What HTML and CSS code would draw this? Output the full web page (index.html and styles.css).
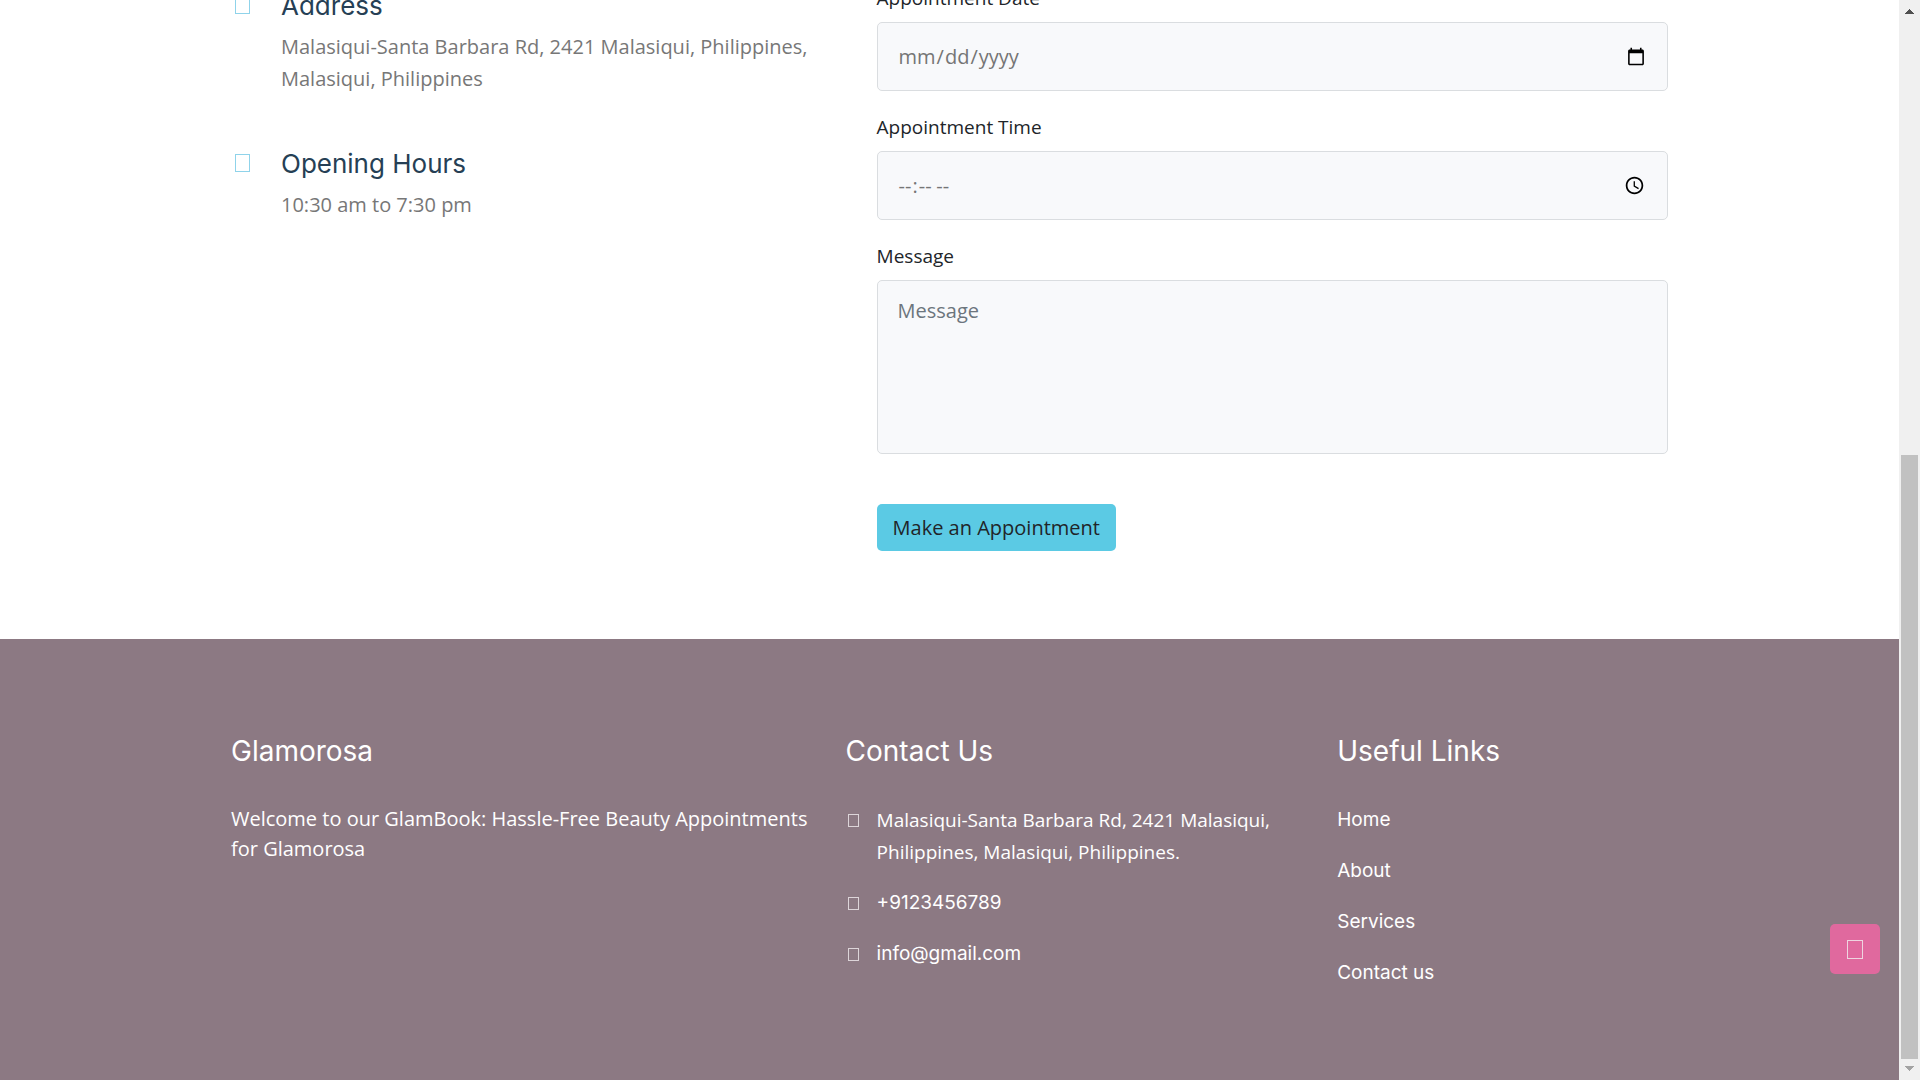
FILE: index.html
```html
<!DOCTYPE html>
<html lang="en">
<head>
  <meta charset="utf-8">
  <meta name="viewport" content="width=device-width, initial-scale=1">
  <title>Glamorosa</title>
  <link rel="stylesheet" href="styles.css">
</head>
<body>
  <div class="page">
    <main class="contact">
      <div class="container contact-row">
        <section class="info">
          <article class="info-item">
            <svg class="info-icon" viewBox="0 0 16 18" aria-hidden="true"><rect x="0.5" y="0.5" width="14" height="17"/></svg>
            <div>
              <h2 class="info-title">Address</h2>
              <p class="info-text">Malasiqui-Santa Barbara Rd, 2421 Malasiqui, Philippines, Malasiqui, Philippines</p>
            </div>
          </article>
          <article class="info-item">
            <svg class="info-icon" viewBox="0 0 16 18" aria-hidden="true"><rect x="0.5" y="0.5" width="14" height="17"/></svg>
            <div>
              <h2 class="info-title">Opening Hours</h2>
              <p class="info-text">10:30 am to 7:30 pm</p>
            </div>
          </article>
        </section>
        <form class="booking">
          <div class="field">
            <label class="label" for="date">Appointment Date</label>
            <input class="control" type="date" id="date">
          </div>
          <div class="field">
            <label class="label" for="time">Appointment Time</label>
            <input class="control" type="time" id="time">
          </div>
          <div class="field">
            <label class="label" for="message">Message</label>
            <textarea class="control control-area" id="message" placeholder="Message"></textarea>
          </div>
          <button class="submit" type="submit">Make an Appointment</button>
        </form>
      </div>
    </main>

    <footer class="footer">
      <div class="container footer-row">
        <section class="footer-col">
          <h2 class="footer-title">Glamorosa</h2>
          <p class="footer-about">Welcome to our GlamBook: Hassle-Free Beauty Appointments for Glamorosa</p>
        </section>
        <section class="footer-col">
          <h2 class="footer-title">Contact Us</h2>
          <ul class="list">
            <li class="contact-line">
              <svg class="line-icon" viewBox="0 0 12 14" aria-hidden="true"><rect x="0.5" y="0.5" width="10" height="12"/></svg>
              <span>Malasiqui-Santa Barbara Rd, 2421 Malasiqui, Philippines, Malasiqui, Philippines.</span>
            </li>
            <li class="contact-line">
              <svg class="line-icon" viewBox="0 0 12 14" aria-hidden="true"><rect x="0.5" y="0.5" width="10" height="12"/></svg>
              <a class="link" href="tel:+9123456789">+9123456789</a>
            </li>
            <li class="contact-line">
              <svg class="line-icon" viewBox="0 0 12 14" aria-hidden="true"><rect x="0.5" y="0.5" width="10" height="12"/></svg>
              <a class="link" href="mailto:info@gmail.com">info@gmail.com</a>
            </li>
          </ul>
        </section>
        <nav class="footer-col">
          <h2 class="footer-title">Useful Links</h2>
          <ul class="list">
            <li><a class="link" href="#home">Home</a></li>
            <li><a class="link" href="#about">About</a></li>
            <li><a class="link" href="#services">Services</a></li>
            <li><a class="link" href="#contact">Contact us</a></li>
          </ul>
        </nav>
      </div>
    </footer>
  </div>

  <button class="to-top" type="button" aria-label="Back to top">
    <svg class="to-top-icon" viewBox="0 0 16 19" aria-hidden="true"><rect x="0.5" y="0.5" width="15" height="18"/></svg>
  </button>

  <div class="scrollbar" aria-hidden="true">
    <svg class="arrow arrow-up" viewBox="0 0 9 5"><path d="M0 5h9V4H8V3H7V2H6V1H5V0H4v1H3v1H2v1H1v1H0z"/></svg>
    <div class="track"><div class="thumb"></div></div>
    <svg class="arrow arrow-down" viewBox="0 0 9 5"><path d="M0 0h9v1H8v1H7v1H6v1H5v1H4V4H3V3H2V2H1V1H0z"/></svg>
  </div>
</body>
</html>
```
FILE: styles.css
```css
* {
  box-sizing: border-box;
}

body {
  margin: 0;
  display: flex;
  min-height: 100vh;
  overflow: hidden;
  background: #fff;
  color: #212529;
  font: 20px/30px "Open Sans", "Noto Sans", sans-serif;
}

h2,
p,
ul {
  margin: 0;
  padding: 0;
}

.page {
  flex: 1;
  min-width: 0;
  display: flex;
  flex-direction: column;
}

.container {
  width: 100%;
  max-width: 1475px;
  margin: 0 auto;
}

/* Contact section, scrolled partly out of view */
.contact {
  margin-top: -17px;
  padding-bottom: 88px;
}

.contact-row {
  display: grid;
  grid-template-columns: 5fr 7fr;
}

.info {
  padding: 3px 19px 0;
  display: flex;
  flex-direction: column;
  gap: 49px;
}

.info-item {
  display: flex;
  gap: 30px;
  padding-left: 4px;
}

.info-icon {
  flex: none;
  width: 16px;
  height: 18px;
  margin-top: 10px;
  fill: none;
  stroke: #8fd3ea;
}

.info-title {
  color: #263f55;
  font: 400 26px/40px Inter, "Open Sans", sans-serif;
}

.info-text {
  margin-top: 5px;
  color: #777;
  line-height: 32px;
}

.booking {
  padding: 0 19px 0 50px;
}

.field {
  display: flex;
  flex-direction: column;
  gap: 9px;
  margin-bottom: 21px;
}

.label {
  font-size: 19px;
}

.control {
  width: 100%;
  height: 69px;
  padding: 15px 19px 15px 20px;
  border: 1px solid #dadde0;
  border-radius: 5px;
  background: #f8f9fb;
  color: #757575;
  font: inherit;
}

.control-area {
  height: 174px;
  display: block;
  resize: none;
}

.control-area::placeholder {
  color: #6c757d;
}

.submit {
  margin-top: 50px;
  height: 47px;
  padding: 0 16px;
  display: block;
  border: 0;
  border-radius: 5px;
  background: #5bcae4;
  color: #212529;
  font: inherit;
}

/* Footer */
.footer {
  flex: 1;
  padding: 88px 0;
  background: #8c7983;
  color: #fff;
}

.footer-row {
  display: grid;
  grid-template-columns: 5fr 4fr 3fr;
}

.footer-col {
  padding: 0 19px;
}

.footer-title {
  margin-bottom: 25px;
  font: 400 28px/48px Inter, "Open Sans", sans-serif;
}

.footer-about {
  padding-top: 4px;
}

.list {
  list-style: none;
  display: flex;
  flex-direction: column;
  gap: 19px;
  padding-top: 4px;
  font-size: 19px;
  line-height: 32px;
}

.contact-line {
  display: flex;
  gap: 17px;
  padding-left: 2px;
}

.line-icon {
  flex: none;
  width: 12px;
  height: 14px;
  margin-top: 10px;
  fill: none;
  stroke: #ddd5d9;
}

.link {
  display: block;
  color: inherit;
  font-family: Inter, "Open Sans", sans-serif;
  text-decoration: none;
}

.to-top {
  position: fixed;
  right: 40px;
  bottom: 106px;
  width: 50px;
  height: 50px;
  display: grid;
  place-items: center;
  padding: 0;
  border: 0;
  border-radius: 5px;
  background: #e0699e;
}

.to-top-icon {
  width: 16px;
  height: 19px;
  fill: none;
  stroke: #eed5e0;
}

/* Window scrollbar */
.scrollbar {
  flex: none;
  width: 21px;
  height: 100vh;
  display: flex;
  flex-direction: column;
  align-items: center;
  gap: 7px;
  padding: 9px 0;
  background: #f0f0f0;
}

.arrow {
  width: 9px;
  height: 5px;
}

.arrow-up {
  fill: #505050;
}

.arrow-down {
  fill: #a3a3a3;
}

.track {
  flex: 1;
  display: flex;
  flex-direction: column;
  justify-content: flex-end;
}

.thumb {
  width: 17px;
  height: 58.2%;
  background: #c1c1c1;
}
```
